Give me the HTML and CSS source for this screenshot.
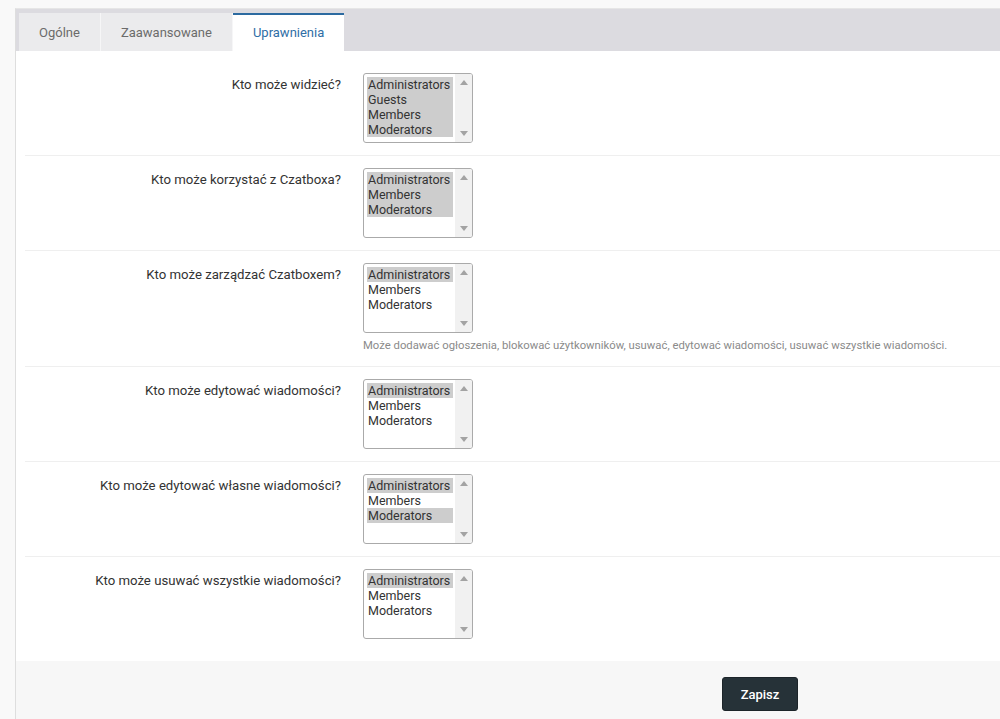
FILE: index.html
```html
<!DOCTYPE html>
<html lang="pl">
<head>
<meta charset="utf-8">
<title>Uprawnienia</title>
<link rel="stylesheet" href="styles.css">
</head>
<body>
<div class="panel">
  <div class="tabbar">
    <div class="tab">Ogólne</div>
    <div class="tab">Zaawansowane</div>
    <div class="tab active">Uprawnienia</div>
  </div>
  <div class="content">
    <div class="row">
      <div class="label">Kto może widzieć?</div>
      <div class="control">
        <div class="listbox" role="listbox">
          <div class="options">
            <div class="opt sel">Administrators</div>
            <div class="opt sel">Guests</div>
            <div class="opt sel">Members</div>
            <div class="opt sel">Moderators</div>
          </div>
          <div class="scrollbar">
            <svg class="arrow" width="8" height="5" viewBox="0 0 8 5"><path d="M0 5 L4 0 L8 5 Z"/></svg>
            <svg class="arrow" width="8" height="5" viewBox="0 0 8 5"><path d="M0 0 L8 0 L4 5 Z"/></svg>
          </div>
        </div>
      </div>
    </div>
    <div class="row">
      <div class="label">Kto może korzystać z Czatboxa?</div>
      <div class="control">
        <div class="listbox" role="listbox">
          <div class="options">
            <div class="opt sel">Administrators</div>
            <div class="opt sel">Members</div>
            <div class="opt sel">Moderators</div>
          </div>
          <div class="scrollbar">
            <svg class="arrow" width="8" height="5" viewBox="0 0 8 5"><path d="M0 5 L4 0 L8 5 Z"/></svg>
            <svg class="arrow" width="8" height="5" viewBox="0 0 8 5"><path d="M0 0 L8 0 L4 5 Z"/></svg>
          </div>
        </div>
      </div>
    </div>
    <div class="row">
      <div class="label">Kto może zarządzać Czatboxem?</div>
      <div class="control">
        <div class="listbox" role="listbox">
          <div class="options">
            <div class="opt sel">Administrators</div>
            <div class="opt">Members</div>
            <div class="opt">Moderators</div>
          </div>
          <div class="scrollbar">
            <svg class="arrow" width="8" height="5" viewBox="0 0 8 5"><path d="M0 5 L4 0 L8 5 Z"/></svg>
            <svg class="arrow" width="8" height="5" viewBox="0 0 8 5"><path d="M0 0 L8 0 L4 5 Z"/></svg>
          </div>
        </div>
        <div class="help">Może dodawać ogłoszenia, blokować użytkowników, usuwać, edytować wiadomości, usuwać wszystkie wiadomości.</div>
      </div>
    </div>
    <div class="row">
      <div class="label">Kto może edytować wiadomości?</div>
      <div class="control">
        <div class="listbox" role="listbox">
          <div class="options">
            <div class="opt sel">Administrators</div>
            <div class="opt">Members</div>
            <div class="opt">Moderators</div>
          </div>
          <div class="scrollbar">
            <svg class="arrow" width="8" height="5" viewBox="0 0 8 5"><path d="M0 5 L4 0 L8 5 Z"/></svg>
            <svg class="arrow" width="8" height="5" viewBox="0 0 8 5"><path d="M0 0 L8 0 L4 5 Z"/></svg>
          </div>
        </div>
      </div>
    </div>
    <div class="row">
      <div class="label">Kto może edytować własne wiadomości?</div>
      <div class="control">
        <div class="listbox" role="listbox">
          <div class="options">
            <div class="opt sel">Administrators</div>
            <div class="opt">Members</div>
            <div class="opt sel">Moderators</div>
          </div>
          <div class="scrollbar">
            <svg class="arrow" width="8" height="5" viewBox="0 0 8 5"><path d="M0 5 L4 0 L8 5 Z"/></svg>
            <svg class="arrow" width="8" height="5" viewBox="0 0 8 5"><path d="M0 0 L8 0 L4 5 Z"/></svg>
          </div>
        </div>
      </div>
    </div>
    <div class="row">
      <div class="label">Kto może usuwać wszystkie wiadomości?</div>
      <div class="control">
        <div class="listbox" role="listbox">
          <div class="options">
            <div class="opt sel">Administrators</div>
            <div class="opt">Members</div>
            <div class="opt">Moderators</div>
          </div>
          <div class="scrollbar">
            <svg class="arrow" width="8" height="5" viewBox="0 0 8 5"><path d="M0 5 L4 0 L8 5 Z"/></svg>
            <svg class="arrow" width="8" height="5" viewBox="0 0 8 5"><path d="M0 0 L8 0 L4 5 Z"/></svg>
          </div>
        </div>
      </div>
    </div>
  </div>
  <div class="footer">
    <button class="btn" type="button">Zapisz</button>
  </div>
</div>
</body>
</html>
```
FILE: styles.css
```css
* { box-sizing: border-box; }
html, body {
  margin: 0;
  padding: 0;
  background: #f9f9f9;
  font-family: Roboto, "Liberation Sans", Arial, sans-serif;
  color: #333;
  overflow: hidden;
}
.panel {
  margin: 8px 0 0 15px;
  border-top: 1px solid #e6e6e6;
  border-left: 1px solid #dedede;
  background: #fff;
}
.tabbar {
  display: flex;
  align-items: flex-end;
  height: 42px;
  background: #dcdbe0;
  padding-left: 3px;
}
.tab {
  height: 38px;
  padding: 0 20px;
  display: flex;
  align-items: center;
  font-size: 13px;
  color: #6b6b6b;
  background: #ebebed;
  border-right: 1px solid #f6f6f7;
}
.tab.active {
  background: #fff;
  color: #2f6ea6;
  border-top: 2px solid #2c6aa0;
  border-right: none;
  padding-bottom: 2px;
}
.content {
  padding: 10px 0 10px 9px;
}
.row {
  display: grid;
  grid-template-columns: 316px 1fr;
  column-gap: 22px;
  padding: 12px 0;
  border-bottom: 1px solid #efefef;
}
.row:last-child { border-bottom: none; }
.label {
  text-align: right;
  font-size: 13.2px;
  line-height: 18px;
  padding-top: 3px;
  color: #333;
}
.listbox {
  width: 110px;
  height: 70px;
  border: 1px solid #aaa;
  border-radius: 3px;
  display: flex;
  background: #fff;
  overflow: hidden;
}
.options {
  width: 90px;
  padding: 3px 1px 0 3px;
}
.opt {
  font-size: 12.5px;
  line-height: 15px;
  color: #333;
  padding-left: 1px;
  white-space: nowrap;
}
.opt.sel { background: #cdcdcd; }
.scrollbar {
  width: 17px;
  margin-left: auto;
  background: #f1f1f1;
  display: flex;
  flex-direction: column;
  justify-content: space-between;
  align-items: center;
  padding: 6px 0 6px;
}
.arrow { fill: #a3a3a3; display: block; }
.help {
  margin-top: 5px;
  font-size: 11.3px;
  line-height: 16px;
  color: #8a8a8a;
}
.footer {
  background: #f7f7f7;
  padding: 16px 0 10px 706px;
  height: 60px;
}
.btn {
  width: 76px;
  height: 34px;
  background: #263238;
  border: 1px solid #1c2429;
  border-radius: 3px;
  color: #fff;
  font-family: Roboto, "Liberation Sans", Arial, sans-serif;
  font-size: 13px;
  font-weight: 500;
}
```
